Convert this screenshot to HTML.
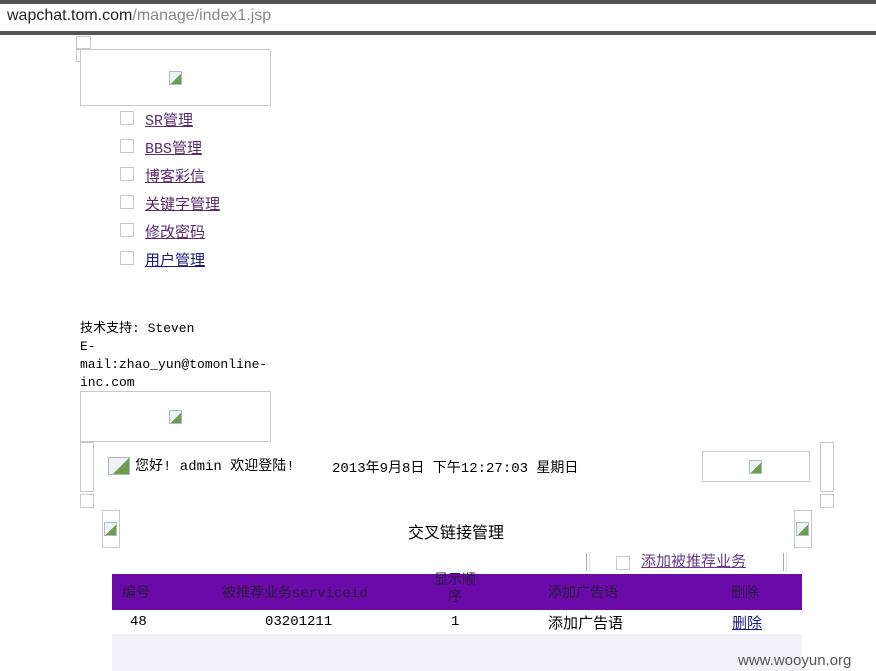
<!DOCTYPE html>
<html><head><meta charset="utf-8"><style>
body{margin:0;width:876px;height:671px;position:relative;overflow:hidden;background:#fff;font-family:"Liberation Mono","Noto Sans CJK SC",monospace;font-size:14px;color:#000}
.a{position:absolute;white-space:nowrap}
.bx{position:absolute;border:1px solid #c8c8c8;box-sizing:border-box}
.img{position:absolute;width:13px;height:14px;background:linear-gradient(135deg,#eef3f8 55%,#6a9e4a 56%);border:1px solid #b0b8c0;box-sizing:border-box}
.lk{position:absolute;color:#5a2a6a;text-decoration:underline;font-size:15px;white-space:nowrap}
.cb{position:absolute;width:14px;height:14px;border:1px solid #c8c8c8;box-sizing:border-box}
.h{position:absolute;color:#2a1a40;font-size:14px;white-space:nowrap}
</style></head><body>
<div class="a" style="left:0;top:0;width:876px;height:4px;background:#555"></div>
<div class="a" style="left:0;top:4px;width:876px;height:27px;background:#fff;border-bottom:1px solid #888"></div>
<div class="a" style="left:0;top:31px;width:876px;height:4px;background:#555"></div>
<div class="a" style="left:7px;top:7px;font-family:'Liberation Sans',sans-serif;font-size:16px;color:#222">wapchat.tom.com<span style="color:#888">/manage/index1.jsp</span></div>
<div class="bx" style="left:76px;top:36px;width:15px;height:13px"></div>
<div class="bx" style="left:76px;top:49px;width:5px;height:13px"></div>
<div class="bx" style="left:80px;top:49px;width:191px;height:57px"></div>
<div class="img" style="left:169px;top:71px"></div>
<div class="cb" style="left:120px;top:111px"></div><a class="lk" style="left:145px;top:109px">SR管理</a>
<div class="cb" style="left:120px;top:139px"></div><a class="lk" style="left:145px;top:137px">BBS管理</a>
<div class="cb" style="left:120px;top:167px"></div><a class="lk" style="left:145px;top:165px">博客彩信</a>
<div class="cb" style="left:120px;top:195px"></div><a class="lk" style="left:145px;top:193px">关键字管理</a>
<div class="cb" style="left:120px;top:223px"></div><a class="lk" style="left:145px;top:221px">修改密码</a>
<div class="cb" style="left:120px;top:251px"></div><a class="lk" style="left:145px;top:249px;color:#1a1a7a">用户管理</a>
<div class="a" style="left:80px;top:320px;font-size:13px;line-height:18px;width:200px;white-space:normal">技术支持: Steven<br>E-<br>mail:zhao_yun@tomonline-<br>inc.com</div>
<div class="bx" style="left:80px;top:391px;width:191px;height:51px"></div>
<div class="img" style="left:169px;top:410px"></div>
<div class="bx" style="left:80px;top:442px;width:14px;height:50px"></div>
<div class="bx" style="left:80px;top:494px;width:14px;height:14px"></div>
<div class="img" style="left:108px;top:457px;width:22px;height:18px"></div>
<div class="a" style="left:135px;top:455px;font-size:14px">您好! admin 欢迎登陆!</div>
<div class="a" style="left:332px;top:457px;font-size:14px">2013年9月8日 下午12:27:03 星期日</div>
<div class="bx" style="left:702px;top:451px;width:108px;height:31px"></div>
<div class="img" style="left:749px;top:460px"></div>
<div class="bx" style="left:820px;top:442px;width:14px;height:50px"></div>
<div class="bx" style="left:820px;top:494px;width:14px;height:14px"></div>
<div class="bx" style="left:102px;top:510px;width:18px;height:38px"></div>
<div class="img" style="left:104px;top:522px"></div>
<div class="a" style="left:408px;top:519px;font-size:16px">交叉链接管理</div>
<div class="bx" style="left:794px;top:510px;width:18px;height:38px"></div>
<div class="img" style="left:796px;top:522px"></div>
<div class="a" style="left:586px;top:553px;width:2px;height:18px;border-left:1px solid #aaa;border-right:1px solid #ddd"></div>
<div class="cb" style="left:616px;top:556px"></div>
<a class="lk" style="left:641px;top:550px;color:#6a3a8a">添加被推荐业务</a>
<div class="a" style="left:783px;top:553px;width:2px;height:18px;border-left:1px solid #aaa;border-right:1px solid #ddd"></div>
<div class="a" style="left:112px;top:574px;width:690px;height:36px;background:#6a0aa8"></div>
<div class="h" style="left:122px;top:582px">编号</div>
<div class="h" style="left:222px;top:582px">被推荐业务serviceid</div>
<div class="h" style="left:428px;top:573px;width:54px;text-align:center;line-height:17px;white-space:normal">显示顺<br>序</div>
<div class="h" style="left:548px;top:582px">添加广告语</div>
<div class="h" style="left:731px;top:582px">删除</div>
<div class="a" style="left:130px;top:614px">48</div>
<div class="a" style="left:265px;top:614px">03201211</div>
<div class="a" style="left:451px;top:614px">1</div>
<div class="a" style="left:548px;top:612px;font-size:15px">添加广告语</div>
<a class="lk" style="left:732px;top:612px;color:#1a1a7a">删除</a>
<div class="a" style="left:112px;top:634px;width:690px;height:37px;background:#f2f2f8"></div>
<div class="a" style="left:738px;top:652px;font-family:'Liberation Sans',sans-serif;font-size:15px;color:#555">www.wooyun.org</div>
</body></html>
